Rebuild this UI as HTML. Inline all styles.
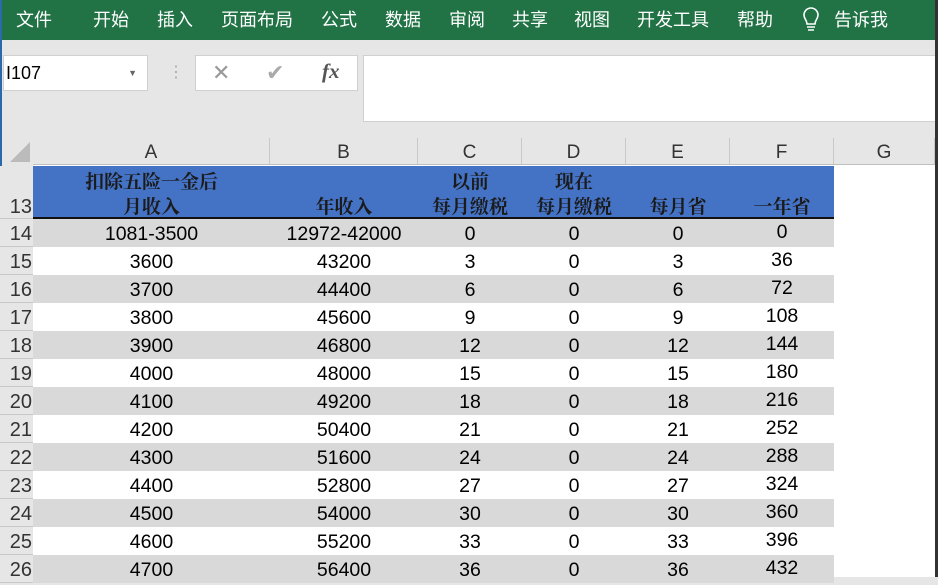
<!DOCTYPE html>
<html><head><meta charset="utf-8"><style>
*{margin:0;padding:0;box-sizing:border-box}
body{width:938px;height:577px;overflow:hidden;background:#e6e6e6;position:relative;font-family:"Liberation Sans","Noto Sans CJK SC",sans-serif}
.abs{position:absolute}
#rib{left:0;top:0;width:938px;height:40px;background:#217346;color:#fff;font-size:18px}
#rib span{position:absolute;top:6px}
.cell{position:absolute;text-align:center;font-size:19.5px;color:#000}
.hdr{position:absolute;top:138px;height:27px;font-size:19px;color:#333;text-align:center;line-height:30px;border-right:1px solid #c8c8c8}
.rn{position:absolute;left:0;width:33px;font-size:20px;color:#333;text-align:right;padding-right:1px;border-bottom:1px solid #c8c8c8;background:#e6e6e6;overflow:hidden;white-space:nowrap}
.rn b{font-weight:normal;position:absolute;right:1px}
.bh{position:absolute;font-family:"Noto Serif CJK SC",serif;font-weight:bold;font-size:19px;color:#1b1b1b;text-align:center}
</style></head><body>
<div id="rib" class="abs">
<span style="left:16px">文件</span><span style="left:93px">开始</span><span style="left:157px">插入</span><span style="left:221px">页面布局</span><span style="left:321px">公式</span><span style="left:385px">数据</span><span style="left:449px">审阅</span><span style="left:512px">共享</span><span style="left:574px">视图</span><span style="left:637px">开发工具</span><span style="left:737px">帮助</span>
<svg class="abs" style="left:801px;top:7px" width="20" height="26" viewBox="0 0 20 26"><path d="M6 17 C6 13 3 12 3 8 A7 7 0 0 1 17 8 C17 12 14 13 14 17 Z M6 20 H14 M7 23 H13" fill="none" stroke="#fff" stroke-width="1.6"/></svg>
<span style="left:834px">告诉我</span>
</div>
<div class="abs" style="left:0;top:0;width:2px;height:577px;background:#2b6aa8"></div>
<div class="abs" style="left:3px;top:55px;width:145px;height:36px;background:#fff;border:1px solid #d0d0d0;font-size:18px;line-height:34px;padding-left:2px">I107<span style="position:absolute;right:10px;top:0;font-size:9px;color:#666">▼</span></div>
<div class="abs" style="left:168px;top:62px;color:#aaa;font-size:16px">⋮</div>
<div class="abs" style="left:195px;top:55px;width:163px;height:36px;background:#fff;border:1px solid #d0d0d0"><span class="abs" style="left:16px;top:4px;font-size:22px;color:#999">✕</span><span class="abs" style="left:70px;top:4px;font-size:22px;color:#aaa">✔</span><span class="abs" style="left:126px;top:3px;font-size:21px;font-style:italic;font-family:'Liberation Serif',serif;color:#555;font-weight:bold">fx</span></div>
<div class="abs" style="left:363px;top:55px;width:575px;height:67px;background:#fff;border:1px solid #d0d0d0"></div>
<div class="abs" style="left:33px;top:165px;width:902px;height:412px;background:#fff"></div>
<svg class="abs" style="left:8px;top:142px" width="22" height="20"><polygon points="22,0 22,20 2,20" fill="#bbb"/></svg>
<div class="hdr" style="left:33px;width:237px">A</div>
<div class="hdr" style="left:270px;width:148px">B</div>
<div class="hdr" style="left:418px;width:104px">C</div>
<div class="hdr" style="left:522px;width:104px">D</div>
<div class="hdr" style="left:626px;width:104px">E</div>
<div class="hdr" style="left:730px;width:104px">F</div>
<div class="hdr" style="left:834px;width:101px">G</div>
<div class="abs" style="left:33px;top:164px;width:902px;height:1px;background:#c0c0c0"></div>
<div class="abs" style="left:33px;top:166px;width:801px;height:51px;background:#4472c4"></div>
<div class="abs" style="left:33px;top:217px;width:801px;height:2px;background:#111"></div>
<div class="rn" style="top:166px;height:53px;line-height:82px"><b>13</b></div>
<div class="bh" style="left:33px;top:168px;width:237px;line-height:25px">扣除五险一金后<br>月收入</div>
<div class="bh" style="left:270px;top:193px;width:148px;line-height:25px">年收入</div>
<div class="bh" style="left:418px;top:168px;width:104px;line-height:25px">以前<br>每月缴税</div>
<div class="bh" style="left:522px;top:168px;width:104px;line-height:25px">现在<br>每月缴税</div>
<div class="bh" style="left:626px;top:193px;width:104px;line-height:25px">每月省</div>
<div class="bh" style="left:730px;top:193px;width:104px;line-height:25px">一年省</div>
<div id="rows"></div>
<div class="abs" style="left:935px;top:0;width:3px;height:577px;background:#333"></div>
<script>
var d=[["1081-3500","12972-42000",0,0,0,0]];
for(var i=0;i<12;i++){var a=3600+i*100,c=3+3*i;d.push([a,a*12,c,0,c,c*12]);}
var L=[33,270,418,522,626,730],W=[237,148,104,104,104,104],h="";
d.forEach(function(r,i){var t=219+i*28;
if(i%2==0)h+='<div class="abs" style="left:33px;top:'+t+'px;width:801px;height:28px;background:#d9d9d9"></div>';
h+='<div class="rn" style="top:'+t+'px;height:28px;line-height:30px"><b>'+(14+i)+'</b></div>';
r.forEach(function(v,j){h+='<div class="cell" style="left:'+L[j]+'px;top:'+t+'px;width:'+W[j]+'px;line-height:'+(j==5?26:30)+'px">'+v+'</div>';});});
document.getElementById("rows").innerHTML=h;
</script>
</body></html>
